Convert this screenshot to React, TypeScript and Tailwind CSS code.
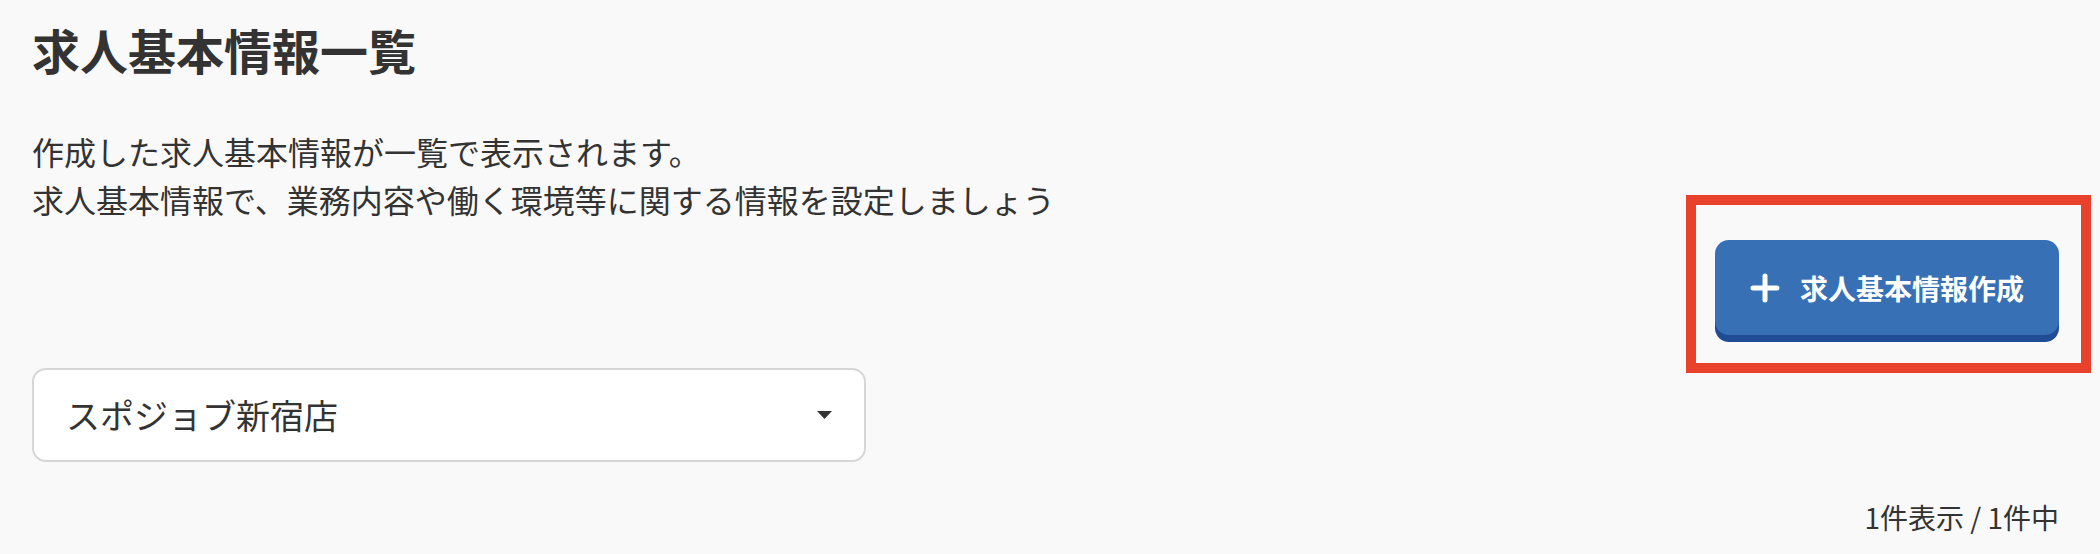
import React from 'react';

const PlusIcon: React.FC = () => (
  <svg width="30" height="30" viewBox="0 0 30 30" fill="none">
    <path d="M15 3v24M3 15h24" stroke="white" strokeWidth="5" strokeLinecap="round" />
  </svg>
);

export default function App() {
  return (
    <div
      className="min-h-[554px] w-full bg-[#f9f9f9] pl-8 pr-[41px] pt-[13px] text-[#333333]"
      style={{ fontFamily: '"Noto Sans CJK JP", "Noto Sans", sans-serif' }}
    >
      <h1 className="text-[48px] font-bold leading-[72px]">求人基本情報一覧</h1>
      <div className="mt-[42px] text-[32px] leading-[48px]">
        <p>作成した求人基本情報が一覧で表示されます。</p>
        <p>求人基本情報で、業務内容や働く環境等に関する情報を設定しましょう</p>
      </div>

      <div className="mt-[17px] flex justify-end">
        <div className="relative">
          <button className="flex h-[95px] w-[344px] items-center justify-center gap-[20px] rounded-[14px] bg-[#3870b5] text-[28px] font-bold text-white shadow-[0_7px_0_#1f4c94]">
            <PlusIcon />
            <span>求人基本情報作成</span>
          </button>
          <div className="pointer-events-none absolute -top-[45px] -bottom-[38px] -left-[29px] -right-[32px] border-[10px] border-[#e8412c]" />
        </div>
      </div>

      <div className="mt-[33px] flex h-[94px] w-[834px] items-center justify-between rounded-[14px] border-2 border-[#d6d6d6] bg-white pl-[32px] pr-[32px]">
        <span className="text-[34px] leading-none">スポジョブ新宿店</span>
        <svg width="15" height="8" viewBox="0 0 15 8">
          <path d="M0 0h15L7.5 8z" fill="#333333" />
        </svg>
      </div>

      <div className="mt-[34px] flex justify-end text-[28px] leading-[42px]">1件表示 / 1件中</div>
    </div>
  );
}
